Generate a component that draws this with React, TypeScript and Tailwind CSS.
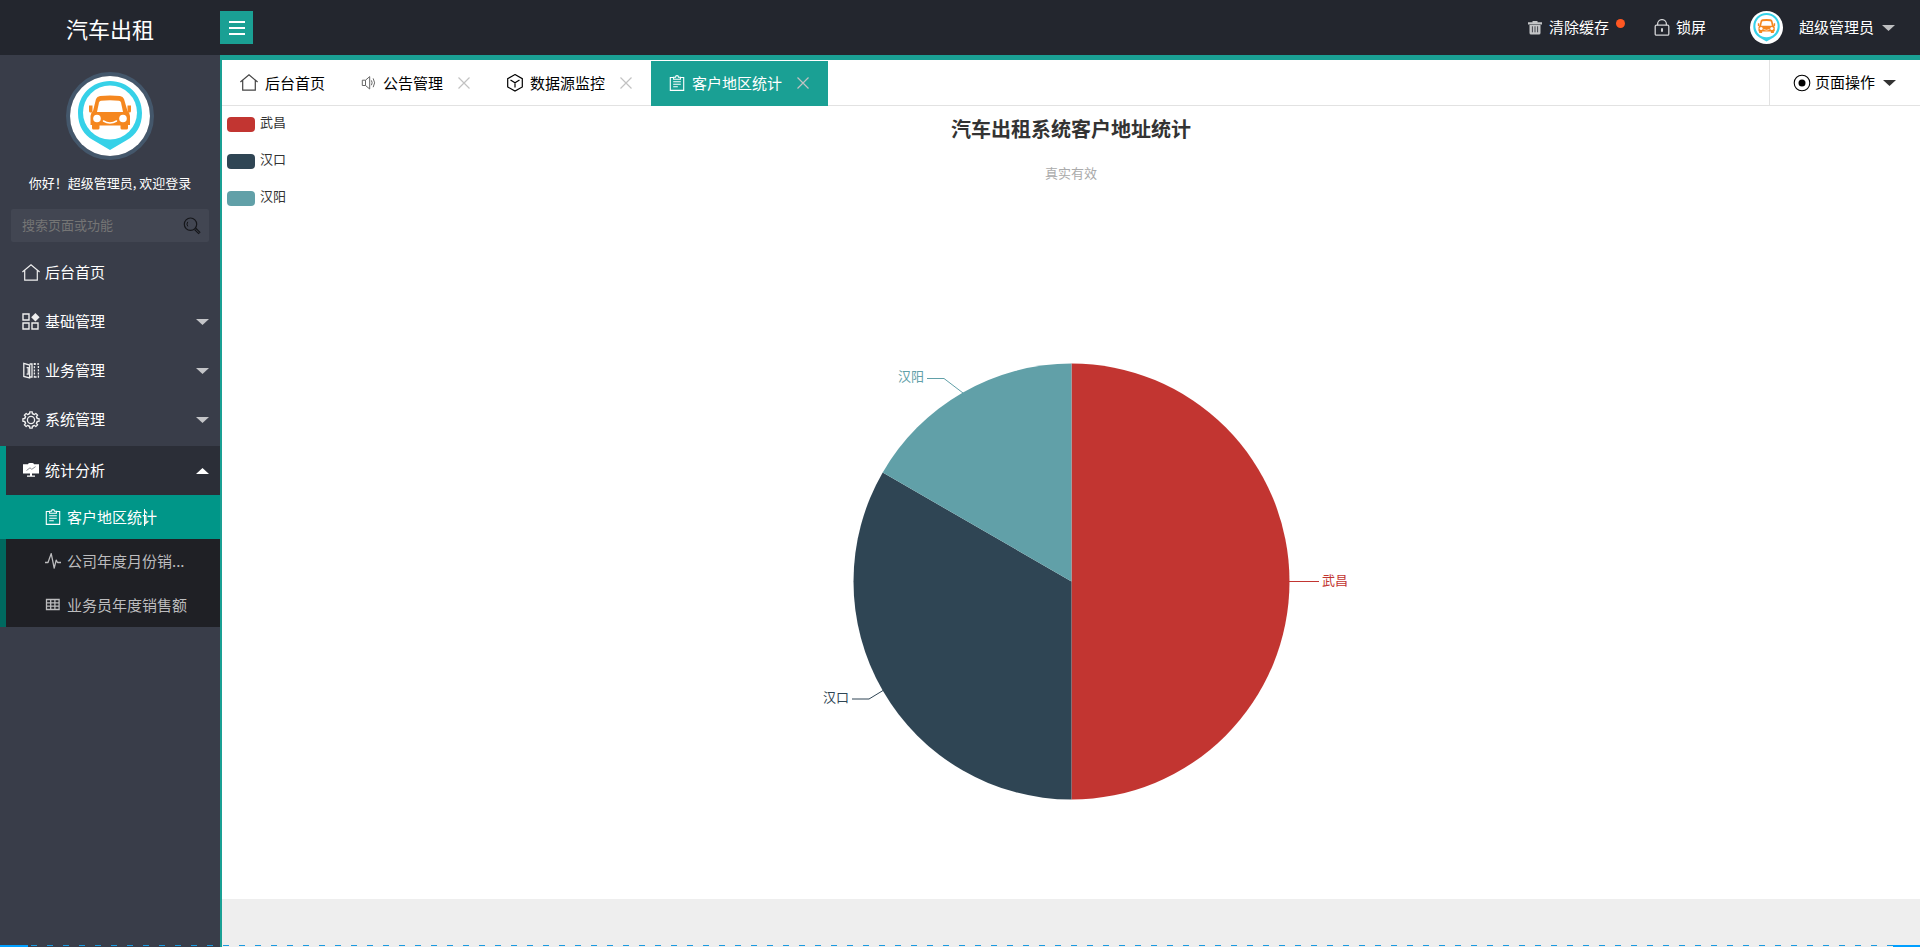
import React, { useState } from 'react';
import clsx from 'clsx';

type IconProps = { className?: string };

const HomeIcon = ({ className }: IconProps) => (
  <svg viewBox="0 0 18 18" className={className} fill="none" stroke="currentColor" strokeWidth="1.2">
    <path d="M0.4 8 9 0.8l8.600 7.200M2.700 6.400v9.800h12.600V6.400" />
  </svg>
);

const GridIcon = ({ className }: IconProps) => (
  <svg viewBox="0 0 18 18" className={className} fill="none" stroke="currentColor" strokeWidth="1.4">
    <path d="M1 1h6v6H1zM1 10h6v6H1zM10 10h6v6h-6z" />
    <path d="M13.400 0 17.600 4.200l-4.200 4.200-4.200-4.200z" fill="currentColor" stroke="none" />
  </svg>
);

const BookIcon = ({ className }: IconProps) => (
  <svg viewBox="0 0 18 18" className={className} fill="none" stroke="currentColor" strokeWidth="1.3">
    <path d="M1.800 1.400 7.600 3v13L1.800 14.400zM4.600 5.600h1.600v6.600H4.600" />
    <path d="M7.600 2h2.400v13H7.600" />
    <path d="M12 2h4.400v13H12M12.400 1v15" strokeDasharray="2 1.200" />
  </svg>
);

const GEAR_TEETH = [0, 45, 90, 135, 180, 225, 270, 315];

const GearIcon = ({ className }: IconProps) => (
  <svg viewBox="0 0 18 18" className={className} fill="none" stroke="currentColor" strokeWidth="1.3">
    {GEAR_TEETH.map((a) => (
      <path key={a} d="M6.500 3.200 7.700 2.700V0.900h2.600v1.800l1.200.5" transform={`rotate(${a} 9 9)`} strokeLinejoin="round" strokeLinecap="round" />
    ))}
    <circle cx="9" cy="9" r="3.600" />
  </svg>
);

const BoardIcon = ({ className }: IconProps) => (
  <svg viewBox="0 0 18 18" className={className} fill="currentColor">
    <path d="M6 2.200C6 1.300 7 1 9 1s3 .3 3 1.200h5V11.600H10v2h3v1.200H5v-1.200h3v-2H1V2.200z" />
    <path d="M4.500 8.500 8 5.800l1.800 1.500L13.600 4.600" fill="none" stroke="#7d8087" strokeWidth="0.9" />
  </svg>
);

const ClipboardIcon = ({ className }: IconProps) => (
  <svg viewBox="0 0 16 16" className={className} fill="none" stroke="currentColor" strokeWidth="1.1">
    <path d="M4.500 2.500H1.300v12.900h13.400V2.500h-3.200" />
    <path d="M4.600 4.300V2.300h1.900a1.500 1.700 0 0 1 3 0h1.900v2zM4.200 6.800h7.600M4.200 9.300h7.600M4.200 11.800h4.600" />
  </svg>
);

const PulseIcon = ({ className }: IconProps) => (
  <svg viewBox="0 0 16 16" className={className} fill="none" stroke="currentColor" strokeWidth="1.3" strokeLinejoin="round">
    <path d="M0 9.500h3L6.200 0.600l3 14.500 2-8 1.300 2.400H16" />
  </svg>
);

const TableIcon = ({ className }: IconProps) => (
  <svg viewBox="0 0 16 16" className={className} fill="none" stroke="currentColor" strokeWidth="1.3">
    <path d="M1.500 2.500h12.600v10H1.500zM1.500 5.900h12.600M1.500 9.200h12.600M5.700 2.500v10M9.900 2.500v10" />
  </svg>
);

const SoundIcon = ({ className }: IconProps) => (
  <svg viewBox="0 0 16 16" className={className} fill="none" stroke="currentColor" strokeWidth="1">
    <path d="M2.300 5.200h3.200L9.700 1.600v12.400l-4.200-3.500H2.300zM5.500 5.200v5.300M11.400 5.400q1.500 2.400 0 4.800M13.200 3.400q2.800 4.400 0 8.800" />
  </svg>
);

const CubeIcon = ({ className }: IconProps) => (
  <svg viewBox="0 0 16 18" className={className} fill="none" stroke="currentColor" strokeWidth="1.2">
    <path d="M8 0.600 15.300 4.700v8.200L8 17 .7 12.900V4.700zM3.500 6 8 8.800 12.500 6M8 8.800v4.600" />
  </svg>
);

const TrashIcon = ({ className }: IconProps) => (
  <svg viewBox="0 0 14 14" className={className} fill="currentColor">
    <path d="M0 1.200h4.500V0h5v1.200H14V3.400H0z" />
    <path d="M1.500 4h11V11.900q0 1.600-1.600 1.600H3.100q-1.600 0-1.600-1.600z" />
    <path d="M4.400 5.300v6M7 5.300v6M9.600 5.300v6" stroke="#23262e" strokeWidth="0.8" />
  </svg>
);

const LockIcon = ({ className }: IconProps) => (
  <svg viewBox="0 0 16 18" className={className} fill="none" stroke="currentColor" strokeWidth="1.3">
    <rect x="1.200" y="6.200" width="13.600" height="10" rx="1.200" />
    <path d="M3.600 6.200V5a4.400 4.400 0 0 1 8.800 0v1.200" />
    <path d="M8 9.200v3.600" strokeWidth="2" />
  </svg>
);

const TargetIcon = ({ className }: IconProps) => (
  <svg viewBox="0 0 18 18" className={className}>
    <circle cx="9" cy="9" r="7.800" fill="none" stroke="currentColor" strokeWidth="1.1" />
    <circle cx="9" cy="9" r="3.500" fill="currentColor" />
  </svg>
);

const SearchIcon = ({ className }: IconProps) => (
  <svg viewBox="0 0 18 18" className={className} fill="none" stroke="currentColor" strokeWidth="1.2">
    <circle cx="7.500" cy="7.200" r="6.200" />
    <path d="M4.800 9.400a3.800 3.800 0 0 1 0-4.600" strokeWidth="1" />
    <path d="m12.200 11.900 4.400 4.400" strokeWidth="3" />
    <path d="m12.600 12.300 3.500 3.500" stroke="#424652" strokeWidth="0.9" />
  </svg>
);

const CloseIcon = ({ className }: IconProps) => (
  <svg viewBox="0 0 12 12" className={className} fill="none" stroke="currentColor" strokeWidth="1.2">
    <path d="m0.500 0.500 11 11M11.500 0.500l-11 11" />
  </svg>
);

const Caret = ({ className }: IconProps) => (
  <svg viewBox="0 0 13 6" className={clsx('h-[6px] w-[13px] shrink-0', className)} fill="currentColor">
    <path d="M0 0h13L6.500 6z" />
  </svg>
);

const CarLogo = ({ className }: IconProps) => (
  <svg viewBox="0 0 80 80" className={className}>
    <circle cx="40" cy="40" r="40" fill="#fff" />
    <path d="M40 5C22 5 8 19 8 37c0 13 6 22 15 27l17 10 17-10c9-5 15-14 15-27C72 19 58 5 40 5z" fill="#36d1e8" />
    <circle cx="40" cy="36.500" r="27" fill="#fff" />
    <g fill="#f5871f">
      <path d="M26 23q1-2.500 4-3 10-1.200 20 0 3 .5 4 3l3.500 12q2.500 2 2.500 5v9h-2V52q0 1.500-1.500 1.500h-4.500q-1.500 0-1.500-1.500v-2.500h-21V52q0 1.500-1.500 1.500h-4.500q-1.500 0-1.500-1.500v-3h-1.500v-9q0-3 2.500-5z" />
      <path d="M19 29.500h3.500v7H20.500q-1.500 0-1.500-1.500zM61 29.500h-3.500v7h2q1.500 0 1.500-1.500z" />
    </g>
    <path d="M29 26.500q.5-1.500 2-1.700 9-1 18 0 1.500.2 2 1.700L53 36H27z" fill="#fff" />
    <circle cx="27" cy="42.500" r="3.800" fill="#fff" />
    <circle cx="53" cy="42.500" r="3.800" fill="#fff" />
    <path d="M33.500 45q6.500 4 13 0" fill="none" stroke="#fff" strokeWidth="1.500" strokeLinecap="round" />
  </svg>
);

const menus = [
  { name: '后台首页', icon: HomeIcon, expandable: false },
  { name: '基础管理', icon: GridIcon, expandable: true },
  { name: '业务管理', icon: BookIcon, expandable: true },
  { name: '系统管理', icon: GearIcon, expandable: true },
];

const reports = [
  { name: '客户地区统计', icon: ClipboardIcon },
  { name: '公司年度月份销...', icon: PulseIcon },
  { name: '业务员年度销售额', icon: TableIcon },
];

const tabs = [
  { name: '后台首页', icon: HomeIcon, size: 'h-[18px] w-[18px] text-[#444]', closable: false },
  { name: '公告管理', icon: SoundIcon, size: 'h-4 w-4 text-[#666]', closable: true },
  { name: '数据源监控', icon: CubeIcon, size: 'h-[18px] w-4', closable: true },
  { name: '客户地区统计', icon: ClipboardIcon, size: 'h-4 w-4', closable: true },
];

const legend = [
  { name: '武昌', color: 'bg-[#c23531]' },
  { name: '汉口', color: 'bg-[#2f4554]' },
  { name: '汉阳', color: 'bg-[#61a0a8]' },
];

// Pie centre and radius inside the 1698 x 793 chart canvas
const CX = 849.5;
const CY = 475.5;
const R = 218;

const slices = [
  { name: '武昌', value: 3, color: '#c23531', line: '1067,475.5 1097,475.5', x: 1100, y: 479, anchor: 'start' as const },
  { name: '汉口', value: 2, color: '#2f4554', line: '661,584.5 647,593 630,593', x: 627, y: 596, anchor: 'end' as const },
  { name: '汉阳', value: 1, color: '#61a0a8', line: '741,287 722,272.5 705,272.5', x: 702, y: 275, anchor: 'end' as const },
];

const PieChart = () => {
  const total = slices.reduce((sum, s) => sum + s.value, 0);
  let angle = 0;
  const point = (a: number) => `${CX + R * Math.sin(a)} ${CY - R * Math.cos(a)}`;

  return (
    <svg viewBox="0 0 1698 793" className="col-start-1 row-start-1 h-full w-full" role="img" aria-label="汽车出租系统客户地址统计">
      {slices.map((s) => {
        const start = angle;
        angle += (s.value / total) * Math.PI * 2;
        return (
          <g key={s.name}>
            <path d={`M${CX} ${CY}L${point(start)}A${R} ${R} 0 0 1 ${point(angle)}Z`} fill={s.color} />
            <polyline points={s.line} fill="none" stroke={s.color} />
            <text x={s.x} y={s.y} textAnchor={s.anchor} fill={s.color} className="text-[13px]">
              {s.name}
            </text>
          </g>
        );
      })}
    </svg>
  );
};

const Header = () => (
  <header className="flex h-[55px] shrink-0 items-center bg-[#23262e] text-[15px] text-white">
    <div className="w-[220px] shrink-0 text-center text-[22px] leading-[54px]">汽车出租</div>
    <button aria-label="菜单" className="flex h-[33px] w-[33px] flex-col items-center justify-center gap-1 bg-[#1aa094]">
      <span className="h-[2px] w-4 bg-white" />
      <span className="h-[2px] w-4 bg-white" />
      <span className="h-[2px] w-4 bg-white" />
    </button>
    <nav className="ml-auto flex items-center pr-[25px]">
      <button className="relative flex items-center gap-[7px]">
        <TrashIcon className="h-[14px] w-[14px] text-[#c4c5c7]" />
        清除缓存
        <span className="absolute -right-4 top-[3px] h-[9px] w-[9px] rounded-full bg-[#ff5722]" />
      </button>
      <button className="ml-[45px] flex items-center gap-[6px]">
        <LockIcon className="h-[18px] w-4 text-[#d3d4d6]" />
        锁屏
      </button>
      <button className="ml-11 flex items-center">
        <CarLogo className="h-[33px] w-[33px]" />
        <span className="ml-4">超级管理员</span>
        <Caret className="ml-2 text-[#bdbec0]" />
      </button>
    </nav>
  </header>
);

const Sidebar = () => (
  <aside className="flex w-[220px] shrink-0 flex-col bg-[#393d49] text-[15px] text-white">
    <div className="flex flex-col items-center pt-[17px]">
      <div className="h-[88px] w-[88px] rounded-full border-4 border-[#44576b]">
        <CarLogo className="h-full w-full" />
      </div>
      <p className="mt-[13px] text-[13px] leading-5">你好！超级管理员, 欢迎登录</p>
    </div>
    <label className="mx-[11px] mt-4 flex h-[33px] items-center rounded-[2px] bg-[#424652] pl-[11px] pr-2">
      <input
        type="text"
        aria-label="搜索页面或功能"
        placeholder="搜索页面或功能"
        className="min-w-0 flex-1 bg-transparent pb-[2px] text-[13px] outline-none placeholder:text-[#757575]"
      />
      <SearchIcon className="h-[18px] w-[18px] text-[#15161a]" />
    </label>

    <nav className="mt-[6px]">
      <div className="pb-[2px]">
        {menus.map((m) => (
          <button key={m.name} className="flex h-[49px] w-full items-center gap-[5px] pl-[22px] pr-[11px]">
            <m.icon className="h-[18px] w-[18px] text-[#eee]" />
            {m.name}
            {m.expandable && <Caret className="ml-auto text-[#c4c5c8]" />}
          </button>
        ))}
      </div>
      <button className="flex h-[49px] w-full items-center gap-[5px] border-l-[6px] border-[#009688] bg-[#2b2e37] pl-4 pr-[11px]">
        <BoardIcon className="h-[18px] w-[18px]" />
        统计分析
        <Caret className="ml-auto rotate-180" />
      </button>
      <ul>
        {reports.map((r, i) => (
          <li key={r.name} className="relative">
            <a
              href="#"
              className={clsx(
                'flex h-11 items-center gap-[6px] border-l-[6px] pl-[39px]',
                i === 0 ? 'border-[#009688] bg-[#009688] text-white' : 'border-[#00695f] bg-[#1f2025] text-[#bcbcbe]'
              )}
            >
              <r.icon className="h-4 w-4" />
              {r.name}
            </a>
            {/* text cursor resting on the open report */}
            {i === 0 && <span className="pointer-events-none absolute left-36 top-[14px] h-[17px] w-px bg-white" />}
          </li>
        ))}
      </ul>
    </nav>
  </aside>
);

const App = () => {
  const [active, setActive] = useState('客户地区统计');

  return (
    <div className="relative flex h-screen flex-col overflow-hidden font-['Noto_Sans_CJK_SC',sans-serif]">
      <Header />
      <div className="flex min-h-0 flex-1">
        <Sidebar />
        <main className="flex min-w-0 flex-1 flex-col border-l-2 border-t-[5px] border-[#1aa094] bg-[#eee]">
          <div className="flex h-[46px] shrink-0 border-b border-[#e2e2e2] bg-white text-[15px] text-black">
            <ul className="flex pt-px">
              {tabs.map((t) => (
                <li
                  key={t.name}
                  className={clsx(
                    '-mb-px flex items-center pb-px pl-[18px]',
                    t.closable ? 'pr-[19px]' : 'pr-[17px]',
                    t.name === active && 'bg-[#1aa094] text-white'
                  )}
                >
                  <button className="flex items-center gap-[7px]" onClick={() => setActive(t.name)}>
                    <t.icon className={clsx(t.size, t.name === active && 'text-white')} />
                    {t.name}
                  </button>
                  {t.closable && (
                    <button aria-label="关闭" className="ml-[15px] text-[#c2c2c2]">
                      <CloseIcon className="h-3 w-3" />
                    </button>
                  )}
                </li>
              ))}
            </ul>
            <button className="ml-auto flex items-center border-l border-[#e2e2e2] pl-[23px] pr-6">
              <TargetIcon className="h-[18px] w-[18px]" />
              <span className="ml-1">页面操作</span>
              <Caret className="ml-2 text-[#333]" />
            </button>
          </div>

          <section className="grid min-h-0 flex-1 grid-cols-1 grid-rows-1 bg-white">
            <PieChart />
            <div className="col-start-1 row-start-1 flex flex-col items-center self-start pt-[9px]">
              <h1 className="text-[20px] font-bold leading-7 text-[#333]">汽车出租系统客户地址统计</h1>
              <p className="mt-5 text-[13px] leading-5 text-[#aaa]">真实有效</p>
            </div>
            <ul className="col-start-1 row-start-1 flex flex-col gap-[17px] self-start justify-self-start pl-[5px] pt-[6px]">
              {legend.map((l) => (
                <li key={l.name} className="flex items-center gap-[5px] text-[13px] leading-5 text-[#333]">
                  <span className={clsx('mt-1 h-[15px] w-7 rounded-[4px]', l.color)} />
                  {l.name}
                </li>
              ))}
            </ul>
          </section>
          <footer className="h-12 shrink-0" />
        </main>
      </div>

      {/* Dashed strip along the bottom edge */}
      <div className="absolute inset-x-0 bottom-0 flex h-[2px] items-start">
        <span className="h-[2px] w-7 bg-[#009fff]" />
        <span className="h-px flex-1 bg-[repeating-linear-gradient(90deg,transparent_0_3px,#1a9ae0_3px_9px,transparent_9px_16px)]" />
        <span className="h-[2px] w-[27px] bg-[#009fff]" />
      </div>
    </div>
  );
};

export default App;
